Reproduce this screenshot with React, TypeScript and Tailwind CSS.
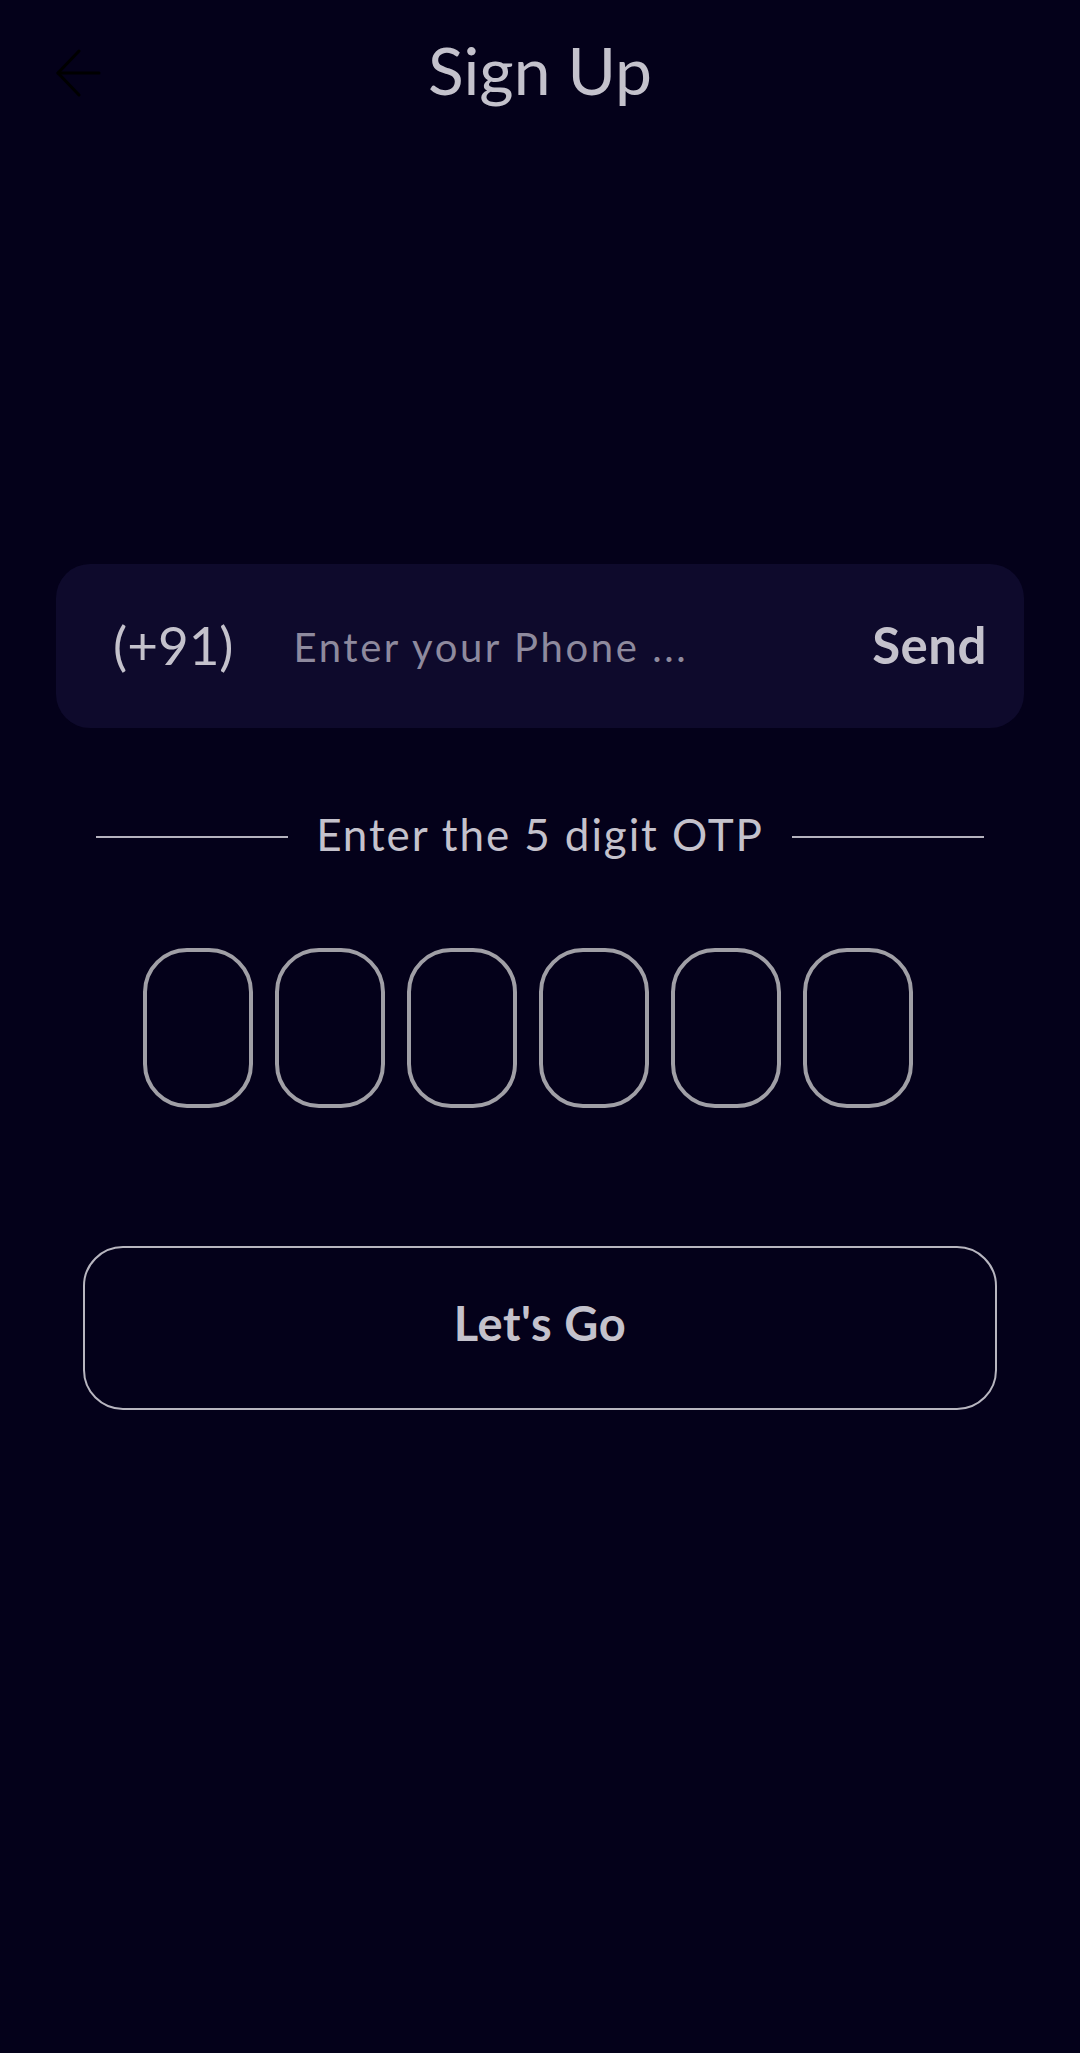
import React from "react";

export default function App() {
  const boxes = [0, 1, 2, 3, 4, 5];
  return (
    <div
      className="w-[1080px] h-[2053px] bg-[#04011a] text-[#c4c2cc]"
      style={{ fontFamily: "Lato, 'Noto Sans', sans-serif" }}
    >
      <div className="h-[146px] grid grid-cols-[1fr_auto_1fr] items-center">
        <div className="pl-[54px] flex items-center">
          <svg width="48" height="48" viewBox="0 0 48 48" fill="none" stroke="#000000" strokeWidth="3" strokeLinecap="round" strokeLinejoin="round">
            <path d="M4 24H45" />
            <path d="M25 2L4 24L25 46" />
          </svg>
        </div>
        <div className="text-[66px] leading-none font-normal text-[#c4c2cc] -mt-[6px]">Sign Up</div>
        <div />
      </div>

      <div className="mt-[418px] mx-[56px] h-[164px] rounded-[34px] bg-[#0e0a2c] flex items-center pl-[57px] pr-[37px] pb-[4px]">
        <span className="text-[53px] leading-none text-[#c4c2cc]">(+91)</span>
        <span className="ml-[60px] flex-1 text-[40px] leading-none tracking-[2.6px] text-[#8e8a9e] mt-[6px]">Enter your Phone ...</span>
        <span className="text-[51px] leading-none font-bold tracking-[0.5px] text-[#c4c2cc]">Send</span>
      </div>

      <div className="mt-[76px] mx-[96px] h-[60px] flex items-center gap-[28px]">
        <div className="flex-1 h-[2px] bg-[#b5b3be] mt-[6px]" />
        <span className="text-[44px] leading-none tracking-[1.9px] text-[#c4c2cc]">Enter the 5 digit OTP</span>
        <div className="flex-1 h-[2px] bg-[#b5b3be] mt-[6px]" />
      </div>

      <div className="mt-[84px] flex justify-center gap-[22px] pr-[24px]">
        {boxes.map((b) => (
          <div key={b} className="w-[110px] h-[160px] rounded-[44px] border-[4px] border-[#a09fa6]" />
        ))}
      </div>

      <div className="mt-[138px] mx-[83px] h-[164px] rounded-[40px] border-2 border-[#b8b6c0] flex items-center justify-center pb-[10px]">
        <span className="text-[47px] leading-none font-bold tracking-[0.6px] text-[#c4c2cc]">Let's Go</span>
      </div>
    </div>
  );
}
